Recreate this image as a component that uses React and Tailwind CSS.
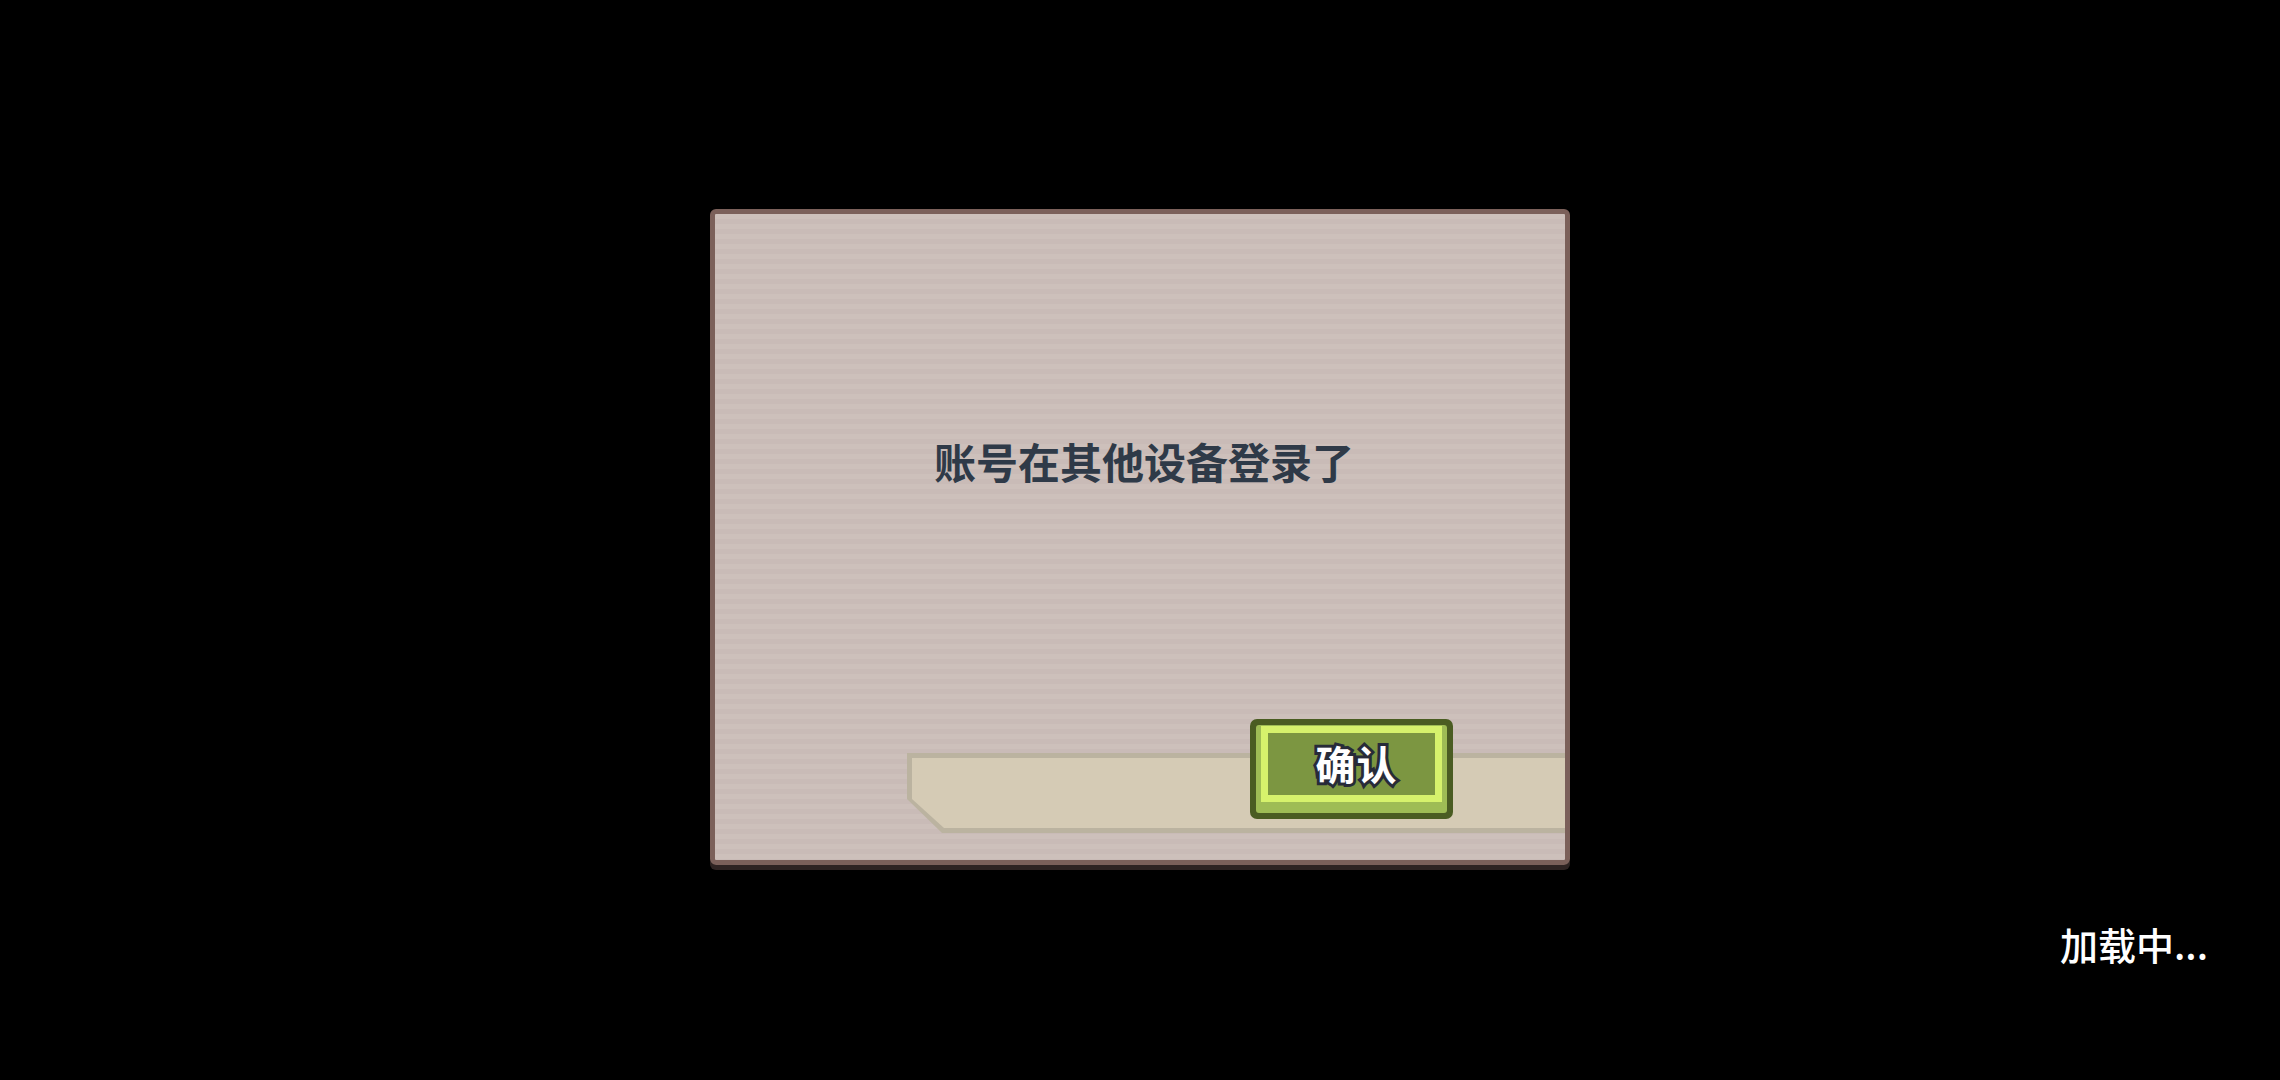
import React from 'react';

const font = "font-['Noto_Sans_CJK_SC','Noto_Sans',sans-serif]";

const ConfirmButton = () => {
  return (
    <button className="block w-[203px] h-[100px] bg-[#4a5c22] p-[6px] rounded-[7px]">
      <div className="w-full h-full bg-[#9ebc55] pl-[5px] pr-[5px] pt-[1px] pb-[11px] rounded-[3px]">
        <div className="w-full h-full bg-[#d6f26c] p-[7px]">
          <div className="w-full h-full bg-[#7c9641] flex items-center justify-center pl-[10px] pb-[2px]">
            <span
              className={`${font} text-[40px] leading-none font-bold text-white [paint-order:stroke_fill] [-webkit-text-stroke:6px_#272b38] tracking-[1px]`}
            >
              确认
            </span>
          </div>
        </div>
      </div>
    </button>
  );
};

const Dialog = () => {
  return (
    <div className="w-[860px] h-[656px] border-[5px] border-[#7b605a] rounded-[6px] shadow-[0_5px_0_#2e2322] bg-[repeating-linear-gradient(to_bottom,#cdc0bb_0px,#cdc0bb_5px,#c9bbb7_5px,#c9bbb7_10px)] flex flex-col">
      <div className="pt-[226px] flex justify-center">
        <p className={`${font} text-[42px] leading-none font-bold text-[#2f3a48] pl-[8px]`}>
          账号在其他设备登录了
        </p>
      </div>
      {/* bottom strip, the button sits over it */}
      <div className="relative mt-[237px]">
        <div className="ml-[192px] mt-[34px] h-[80px] bg-[#bbb3a0] [clip-path:polygon(0_0,100%_0,100%_100%,35px_100%,0_46px)] pt-[5px] pb-[5px] pl-[5px]">
          <div className="w-full h-full bg-[#d5cbb5] [clip-path:polygon(0_0,100%_0,100%_100%,32px_100%,0_41px)]"></div>
        </div>
        <div className="absolute left-[535px] top-0">
          <ConfirmButton />
        </div>
      </div>
    </div>
  );
};

const App = () => {
  return (
    <div className="w-full h-[1080px] bg-black flex flex-col items-center pt-[209px] overflow-hidden">
      <Dialog />
      <div className="w-full flex justify-end pr-[72px] mt-[60px]">
        <span className={`${font} text-[38px] leading-none font-medium text-white`}>加载中...</span>
      </div>
    </div>
  );
};

export default App;
